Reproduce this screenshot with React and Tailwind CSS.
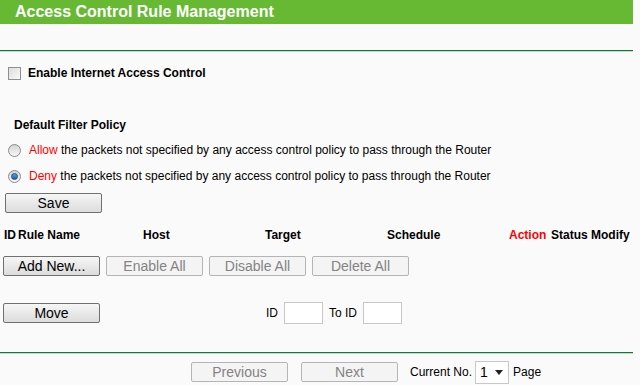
import { useState } from 'react';

const btn =
  'h-[20px] w-[97px] rounded-[2px] border border-[#707070] bg-gradient-to-b from-[#f6f6f6] to-[#dcdcdc] text-[14px] leading-[18px] text-black';
const btnOff =
  'h-[20px] w-[97px] rounded-[2px] border border-[#b5b5b5] bg-[#f4f4f4] text-[14px] leading-[18px] text-[#838383]';

const Radio = ({ checked, onClick }) => (
  <span
    onClick={onClick}
    className="flex h-[13px] w-[13px] items-center justify-center rounded-full border border-[#8a8a8a] bg-gradient-to-b from-[#d4d4d4] to-[#f8f8f8]"
  >
    {checked && <span className="h-[7px] w-[7px] rounded-full border border-[#1c4f86] bg-gradient-to-b from-[#5fa0dc] to-[#1d5ea3]" />}
  </span>
);

const App = () => {
  const [policy, setPolicy] = useState('deny');
  const [enabled, setEnabled] = useState(false);

  return (
    <div className="h-[385px] w-[640px] overflow-hidden bg-[#fafafa] text-[12px] text-black font-['Liberation_Sans',Arial,sans-serif]">
      {/* Title bar */}
      <div className="h-[24px] w-[633px] bg-[#67b934] pl-[15px] text-[16px] font-bold leading-[24px] text-white">
        Access Control Rule Management
      </div>
      <div className="mt-[26px] h-px w-[633px] bg-[#0b7a3b]" />
      <div className="h-px w-[633px] bg-[#c3dbcd]" />

      {/* Enable checkbox */}
      <div className="mt-[13px] flex h-[16px] items-center">
        <span
          onClick={() => setEnabled(!enabled)}
          className="ml-[8px] flex h-[13px] w-[13px] items-center justify-center border border-[#8e8f8f] bg-gradient-to-br from-[#dcdcdc] to-[#fbfbfb] text-[10px] leading-none"
        >
          {enabled ? '✓' : ''}
        </span>
        <span className="ml-[7px] font-bold">Enable Internet Access Control</span>
      </div>

      {/* Default policy */}
      <div className="mt-[36px] flex h-[16px] items-center pl-[14px] font-bold">Default Filter Policy</div>
      <div className="mt-[9px] flex h-[16px] items-center pl-[8px]">
        <Radio checked={policy === 'allow'} onClick={() => setPolicy('allow')} />
        <span className="ml-[8px]">
          <span className="text-[#ff0000]">Allow</span> the packets not specified by any access control policy to pass through the Router
        </span>
      </div>
      <div className="mt-[10px] flex h-[16px] items-center pl-[8px]">
        <Radio checked={policy === 'deny'} onClick={() => setPolicy('deny')} />
        <span className="ml-[8px]">
          <span className="text-[#ff0000]">Deny</span> the packets not specified by any access control policy to pass through the Router
        </span>
      </div>
      <div className="mt-[9px] pl-[5px]">
        <button className={btn}>Save</button>
      </div>

      {/* Rule table header */}
      <div className="mt-[14px] flex h-[16px] items-center pl-[4px] font-bold">
        <span className="w-[14px]">ID</span>
        <span className="w-[125px]">Rule Name</span>
        <span className="w-[122px]">Host</span>
        <span className="w-[122px]">Target</span>
        <span className="w-[122px]">Schedule</span>
        <span className="w-[42px] text-[#ff0000]">Action</span>
        <span className="w-[40px]">Status</span>
        <span>Modify</span>
      </div>

      {/* Bulk actions */}
      <div className="mt-[13px] flex gap-[6px] pl-[3px]">
        <button className={btn}>Add New...</button>
        <button className={btnOff} disabled>Enable All</button>
        <button className={btnOff} disabled>Disable All</button>
        <button className={btnOff} disabled>Delete All</button>
      </div>

      {/* Move */}
      <div className="mt-[25px] flex h-[24px] items-center pl-[3px]">
        <button className={btn}>Move</button>
        <span className="ml-[166px]">ID</span>
        <input className="ml-[6px] h-[22px] w-[39px] border border-[#c8c8c8] bg-white outline-none" />
        <span className="ml-[6px]">To ID</span>
        <input className="ml-[6px] h-[22px] w-[39px] border border-[#c8c8c8] bg-white outline-none" />
      </div>

      <div className="mt-[27px] h-px w-[633px] bg-[#0b7a3b]" />
      <div className="h-px w-[633px] bg-[#c3dbcd]" />

      {/* Pagination */}
      <div className="mt-[6px] flex h-[24px] items-center pl-[191px]">
        <button className={btnOff} disabled>Previous</button>
        <button className={`${btnOff} ml-[13px]`} disabled>Next</button>
        <span className="ml-[12px]">Current No.</span>
        <div className="ml-[3px] flex h-[23px] w-[34px] items-center justify-between border border-[#c8c8c8] bg-white pl-[4px] pr-[5px] text-[14px]">
          <span>1</span>
          <svg width="8" height="5" viewBox="0 0 8 5">
            <path d="M0 0h8L4 5z" fill="#222" />
          </svg>
        </div>
        <span className="ml-[4px]">Page</span>
      </div>
    </div>
  );
};

export default App;
